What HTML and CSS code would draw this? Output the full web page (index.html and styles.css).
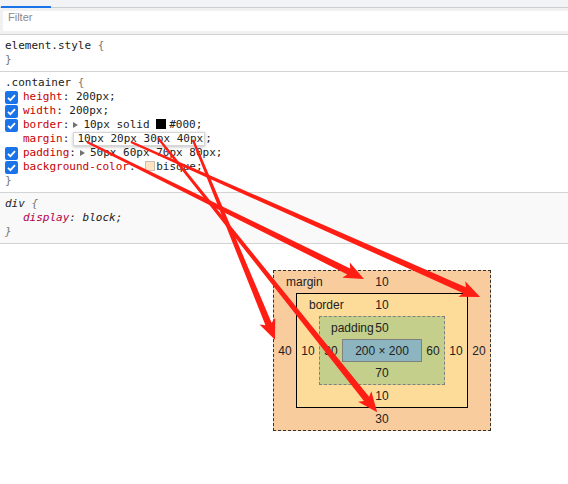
FILE: index.html
```html
<!DOCTYPE html>
<html>
<head>
<meta charset="utf-8">
<link rel="stylesheet" href="styles.css">
</head>
<body>
<div class="tabbar"><span class="tab-active"></span></div>
<div class="filterbar"><div class="filter">Filter</div></div>

<section class="rule">
  <div class="sel">element.style <span class="brace">{</span></div>
  <div class="close brace">}</div>
</section>

<section class="rule">
  <div class="sel">.container <span class="brace">{</span></div>
  <div class="prop"><svg class="cb" viewBox="0 0 13 13"><rect width="13" height="13" rx="2"/><path d="M3 6.8 L5.4 9.2 L10 4.2"/></svg><span class="decl"><span class="name">height</span>: 200px;</span></div>
  <div class="prop"><svg class="cb" viewBox="0 0 13 13"><rect width="13" height="13" rx="2"/><path d="M3 6.8 L5.4 9.2 L10 4.2"/></svg><span class="decl"><span class="name">width</span>: 200px;</span></div>
  <div class="prop"><svg class="cb" viewBox="0 0 13 13"><rect width="13" height="13" rx="2"/><path d="M3 6.8 L5.4 9.2 L10 4.2"/></svg><span class="decl"><span class="name">border</span>:<span class="tri"></span>10px solid <span class="sw sw-black"></span>#000;</span></div>
  <div class="prop nocb"><span class="decl"><span class="name">margin</span>:<span class="edit">10px 20px 30px 40px</span>;</span></div>
  <div class="prop"><svg class="cb" viewBox="0 0 13 13"><rect width="13" height="13" rx="2"/><path d="M3 6.8 L5.4 9.2 L10 4.2"/></svg><span class="decl"><span class="name">padding</span>:<span class="tri"></span>50px 60px 70px 80px;</span></div>
  <div class="prop"><svg class="cb" viewBox="0 0 13 13"><rect width="13" height="13" rx="2"/><path d="M3 6.8 L5.4 9.2 L10 4.2"/></svg><span class="decl"><span class="name">background-color</span>: <span class="sw sw-bisque"></span>bisque;</span></div>
  <div class="close brace">}</div>
</section>

<section class="rule rule-ua">
  <div class="sel">div <span class="brace">{</span></div>
  <div class="prop nocb"><span class="decl"><span class="name ua-name">display</span>: block;</span></div>
  <div class="close brace">}</div>
</section>

<div class="bm-wrap">
  <div class="box bm-margin">
    <span class="lbl">margin</span>
    <div class="top">10</div>
    <div class="side">40</div>
    <div class="box bm-border">
      <span class="lbl">border</span>
      <div class="top">10</div>
      <div class="side">10</div>
      <div class="box bm-padding">
        <span class="lbl lbl-pad">padding</span>
        <div class="top">50</div>
        <div class="side">30</div>
        <div class="content">200 × 200</div>
        <div class="side">60</div>
        <div class="bottom">70</div>
      </div>
      <div class="side">10</div>
      <div class="bottom">10</div>
    </div>
    <div class="side">20</div>
    <div class="bottom">30</div>
  </div>
</div>

<svg class="arrows" viewBox="0 0 568 484" width="568" height="484">
  <polygon transform="translate(87 142) rotate(26.32)" points="0,-1.1 292,-3.3 289,-8.5 309,0 289,8.5 292,3.3 0,1.1"/>
  <polygon transform="translate(131 142) rotate(23.95)" points="0,-1.1 365,-3.3 362,-8.5 382,0 362,8.5 365,3.3 0,1.1"/>
  <polygon transform="translate(158 138) rotate(51.36)" points="0,-1.1 334,-3.3 331,-8.5 351,0 331,8.5 334,3.3 0,1.1"/>
  <polygon transform="translate(193 140) rotate(67.70)" points="0,-1.1 199,-3.3 196,-8.5 216,0 196,8.5 199,3.3 0,1.1"/>
</svg>
</body>
</html>
```

FILE: styles.css
```css
html, body {
  margin: 0;
  padding: 0;
}
body {
  width: 568px;
  height: 484px;
  overflow: hidden;
  position: relative;
  background: #fff;
}

.tabbar {
  height: 7px;
  background: #f1f3f4;
  border-bottom: 1px solid #cbcdd1;
  position: relative;
}
.tab-active {
  position: absolute;
  left: 1px;
  bottom: -1px;
  width: 50px;
  height: 2px;
  background: #1a73e8;
}

.filterbar {
  background: #f1f1f1;
  padding: 3px 0 3px 3px;
  border-bottom: 1px solid #d3d3d3;
}
.filter {
  height: 20px;
  line-height: 20px;
  background: #fff;
  padding-left: 5px;
  font: 11px "Liberation Sans", Arial, sans-serif;
  color: #8a8a8a;
}

.rule {
  padding: 3px 0 4px 5px;
  border-bottom: 1px solid #d3d3d3;
  font: 11px "DejaVu Sans Mono", "Liberation Mono", monospace;
  color: #222;
}
.sel, .close, .decl {
  white-space: pre;
}
.rule-ua {
  background: #f9f9f9;
  font-style: italic;
}
.sel {
  height: 15px;
  line-height: 15px;
}
.close {
  height: 14px;
  line-height: 14px;
}
.brace {
  color: #777;
}
.prop {
  height: 14px;
  line-height: 14px;
  display: flex;
  align-items: center;
}
.nocb {
  padding-left: 18px;
}
.cb {
  width: 13px;
  height: 13px;
  margin-right: 5px;
  flex: none;
}
.cb rect {
  fill: #1a73e8;
}
.cb path {
  fill: none;
  stroke: #fff;
  stroke-width: 1.8;
}
.name {
  color: #c80000;
}
.ua-name {
  color: #b0004a;
}
.tri {
  display: inline-block;
  width: 0;
  height: 0;
  border-left: 5px solid #727272;
  border-top: 3.5px solid transparent;
  border-bottom: 3.5px solid transparent;
  margin: 0 5px 0 4px;
  vertical-align: 0;
}
.sw {
  display: inline-block;
  width: 10px;
  height: 10px;
  box-sizing: border-box;
  vertical-align: -1px;
}
.sw-black {
  background: #000;
  margin-right: 3px;
}
.sw-bisque {
  background: #ffe4c4;
  border: 1px solid #c8bfb4;
  margin: 0 1px 0 3px;
}
.edit {
  display: inline-block;
  height: 12px;
  line-height: 12px;
  margin-left: 4px;
  padding: 0 1px 0 3px;
  border: 1px solid #d6d6d6;
  background: #fff;
  box-shadow: 0 1px 3px rgba(0, 0, 0, 0.25);
}

.bm-wrap {
  padding: 26px 0 0 273px;
}
.box {
  display: grid;
  grid-template-columns: 22px auto 22px;
  grid-template-rows: 22px auto 22px;
  position: relative;
  width: max-content;
  font: 12px "Liberation Sans", Arial, sans-serif;
  color: #222;
}
.bm-margin {
  background: #f9cc9d;
  border: 1px dashed #333;
}
.bm-border {
  background: #fddc9a;
  border: 1px solid #000;
}
.bm-padding {
  background: #c3cf8a;
  border: 1px dashed #808080;
}
.content {
  width: 80px;
  height: 23px;
  box-sizing: border-box;
  background: #8cb5c0;
  border: 1px solid #808080;
  display: flex;
  align-items: center;
  justify-content: center;
}
.top, .bottom {
  grid-column: 1 / 4;
  text-align: center;
  line-height: 22px;
}
.side {
  display: flex;
  align-items: center;
  justify-content: center;
}
.lbl {
  position: absolute;
  left: 12px;
  top: 0;
  line-height: 22px;
}
.lbl-pad {
  left: 11px;
}

.arrows {
  position: absolute;
  left: 0;
  top: 0;
  pointer-events: none;
}
.arrows polygon {
  fill: #ff1e14;
}
```
